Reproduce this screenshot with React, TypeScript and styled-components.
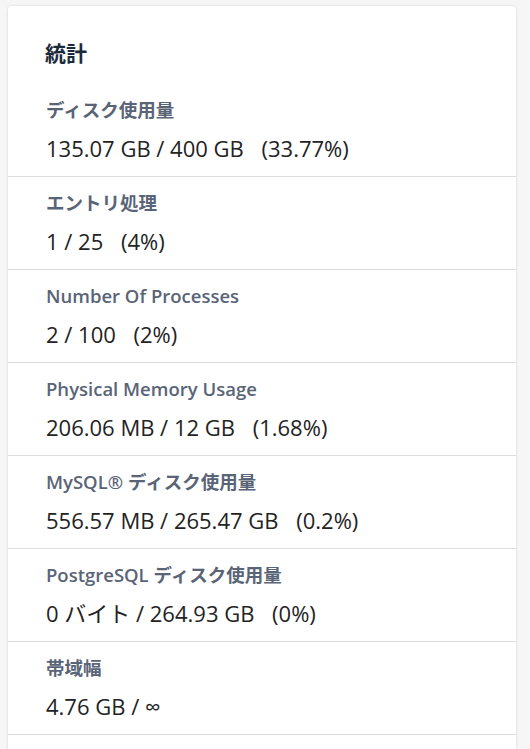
import React from 'react';
import styled, { createGlobalStyle } from 'styled-components';

type Stat = {
  label: string;
  value: string;
  percent?: string;
};

const stats: Stat[] = [
  { label: 'ディスク使用量', value: '135.07 GB / 400 GB', percent: '(33.77%)' },
  { label: 'エントリ処理', value: '1 / 25', percent: '(4%)' },
  { label: 'Number Of Processes', value: '2 / 100', percent: '(2%)' },
  { label: 'Physical Memory Usage', value: '206.06 MB / 12 GB', percent: '(1.68%)' },
  { label: 'MySQL® ディスク使用量', value: '556.57 MB / 265.47 GB', percent: '(0.2%)' },
  { label: 'PostgreSQL ディスク使用量', value: '0 バイト / 264.93 GB', percent: '(0%)' },
  { label: '帯域幅', value: '4.76 GB / ∞' },
];

const GlobalStyle = createGlobalStyle`
  html, body {
    margin: 0;
    padding: 0;
    background-color: #f6f6f6;
  }
  body {
    font-family: 'Open Sans', 'Noto Sans CJK JP', sans-serif;
  }
`;

const StyledPage = styled.div`
  padding: 6px 14px 0 8px;
  height: 749px;
  overflow: hidden;
  box-sizing: border-box;
`;

const StyledCard = styled.section`
  background-color: #ffffff;
  border-radius: 4px 4px 0 0;
  box-shadow: 0 0 3px rgba(0, 0, 0, 0.12), 0 1px 2px rgba(0, 0, 0, 0.06);
  padding-top: 33px;
  min-height: 760px;
`;

const StyledHeading = styled.h2`
  margin: 0 0 17px;
  padding: 0 37px;
  font-size: 21px;
  line-height: 28px;
  font-weight: 700;
  color: #1b2a3b;
`;

const StyledList = styled.ul`
  list-style: none;
  margin: 0;
  padding: 0;
`;

const StyledItem = styled.li`
  padding: 14px 38px 13px;
  border-bottom: 1px solid #dcdcdc;
`;

const StyledLabel = styled.div`
  font-size: 18.5px;
  line-height: 24px;
  font-weight: 600;
  color: #5a6477;
`;

const StyledValue = styled.div`
  margin-top: 11px;
  font-size: 22px;
  line-height: 30px;
  font-weight: 400;
  color: #232323;
`;

const StyledPercent = styled.span`
  margin-left: 12px;
`;

const App = () => {
  return (
    <>
      <GlobalStyle />
      <StyledPage>
        <StyledCard>
          <StyledHeading>統計</StyledHeading>
          <StyledList>
            {stats.map(({ label, value, percent }) => (
              <StyledItem key={label}>
                <StyledLabel>{label}</StyledLabel>
                <StyledValue>
                  {value}
                  {percent && <StyledPercent> {percent}</StyledPercent>}
                </StyledValue>
              </StyledItem>
            ))}
          </StyledList>
        </StyledCard>
      </StyledPage>
    </>
  );
};

export default App;
